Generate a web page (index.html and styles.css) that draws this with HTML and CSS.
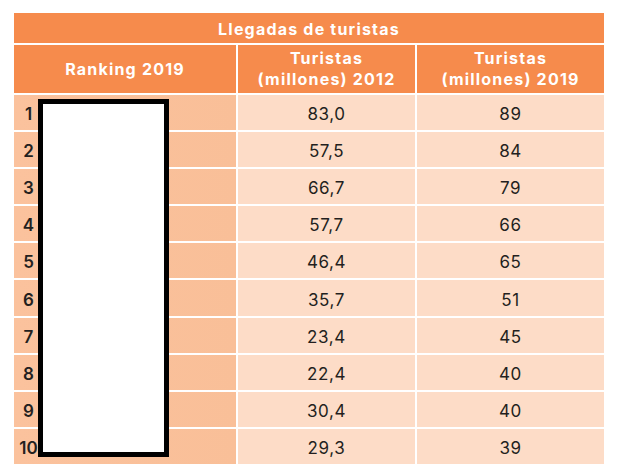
FILE: index.html
```html
<!DOCTYPE html>
<html lang="es">
<head>
<meta charset="utf-8">
<title>Llegadas de turistas</title>
<link rel="stylesheet" href="styles.css">
</head>
<body>
<div class="wrap">
  <div class="grid">
    <div class="title">Llegadas de turistas</div>
    <div class="head">Ranking 2019</div>
    <div class="head">Turistas<br>(millones) 2012</div>
    <div class="head">Turistas<br>(millones) 2019</div>

    <div class="rank"><span class="num">1</span></div><div class="val">83,0</div><div class="val">89</div>
    <div class="rank"><span class="num">2</span></div><div class="val">57,5</div><div class="val">84</div>
    <div class="rank"><span class="num">3</span></div><div class="val">66,7</div><div class="val">79</div>
    <div class="rank"><span class="num">4</span></div><div class="val">57,7</div><div class="val">66</div>
    <div class="rank"><span class="num">5</span></div><div class="val">46,4</div><div class="val">65</div>
    <div class="rank"><span class="num">6</span></div><div class="val">35,7</div><div class="val">51</div>
    <div class="rank"><span class="num">7</span></div><div class="val">23,4</div><div class="val">45</div>
    <div class="rank"><span class="num">8</span></div><div class="val">22,4</div><div class="val">40</div>
    <div class="rank"><span class="num">9</span></div><div class="val">30,4</div><div class="val">40</div>
    <div class="rank"><span class="num">10</span></div><div class="val">29,3</div><div class="val">39</div>
  </div>
  <div class="redact"></div>
</div>
</body>
</html>
```

FILE: styles.css
```css
html, body {
  margin: 0;
  padding: 0;
  background: #ffffff;
}

body {
  font-family: "Inter", "Liberation Sans", sans-serif;
  color: #231f20;
}

.wrap {
  position: relative;
  width: 590px;
  margin: 13px 0 0 14px;
}

.grid {
  display: grid;
  grid-template-columns: 222px 177px 187px;
  grid-template-rows: 30px 48px repeat(10, 35.1px);
  gap: 2px;
  background: #ffffff;
}

.title {
  grid-column: 1 / 4;
  background: #f68b4c;
  color: #ffffff;
  font-weight: 700;
  font-size: 16px;
  letter-spacing: 1.2px;
  padding-top: 2px;
  display: flex;
  align-items: center;
  justify-content: center;
}

.head {
  background: #f68b4c;
  color: #ffffff;
  font-weight: 700;
  font-size: 16px;
  letter-spacing: 1.2px;
  line-height: 21px;
  text-align: center;
  display: flex;
  align-items: center;
  justify-content: center;
}

.rank {
  background: linear-gradient(90deg, #fbc29d 0%, #f9bf98 100%);
  display: flex;
  align-items: center;
  padding-top: 3px;
}

.num {
  width: 29px;
  text-align: center;
  font-weight: 600;
  font-size: 17px;
}

.val {
  background: #fddcc7;
  display: flex;
  align-items: center;
  justify-content: center;
  font-size: 17px;
  letter-spacing: 0.6px;
  padding-top: 3px;
}

.redact {
  position: absolute;
  left: 24px;
  top: 86px;
  width: 131px;
  height: 358px;
  box-sizing: border-box;
  border: 5px solid #000000;
  background: #ffffff;
}
```
